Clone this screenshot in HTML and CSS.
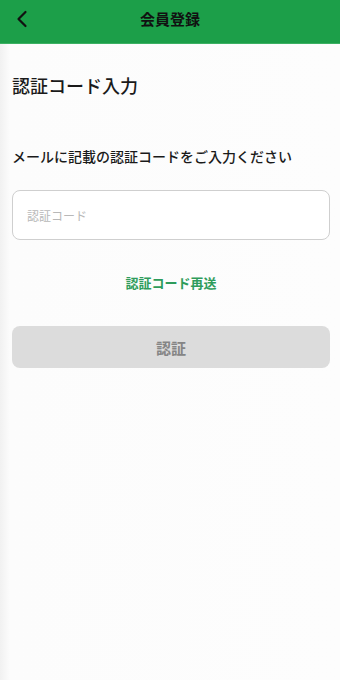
FILE: index.html
```html
<!DOCTYPE html>
<html lang="ja">
<head>
<meta charset="utf-8">
<link rel="stylesheet" href="styles.css">
</head>
<body>
<div class="app">
  <header class="topbar">
    <span class="back">
      <svg width="12" height="18" viewBox="0 0 12 18"><path d="M9.5 2 L2.5 9 L9.5 16" fill="none" stroke="#111" stroke-width="2.2" stroke-linecap="round" stroke-linejoin="round"/></svg>
    </span>
    <h1 class="title">会員登録</h1>
  </header>
  <main class="content">
    <h2 class="heading">認証コード入力</h2>
    <p class="desc">メールに記載の認証コードをご入力ください</p>
    <div class="field"><span class="placeholder">認証コード</span></div>
    <div class="resend">認証コード再送</div>
    <div class="btn">認証</div>
  </main>
</div>
</body>
</html>
```
FILE: styles.css
```css
* { box-sizing: border-box; margin: 0; padding: 0; }
html, body { width: 340px; height: 680px; }
body {
  font-family: "Noto Sans CJK JP", "Noto Sans", sans-serif;
  background: #fdfdfd;
  color: #1a1a1a;
}
.app { height: 680px; background: linear-gradient(to right, #f1f1f1 0px, #fcfcfc 10px, #fdfdfd 100%); }
.topbar {
  height: 44px;
  background: #1c9f49;
  border-bottom: 1px solid #3cb063;
  display: flex;
  align-items: center;
  justify-content: center;
  position: relative;
}
.back { position: absolute; left: 16px; top: 10px; display: flex; }
.title { font-size: 15px; font-weight: 700; color: #111; margin-top: -6px; }
.content { padding: 0 10px 0 12px; display: flex; flex-direction: column; }
.heading { font-size: 18px; font-weight: 500; margin-top: 28px; line-height: 26px; }
.desc { font-size: 14px; font-weight: 500; margin-top: 48px; line-height: 20px; }
.field {
  margin-top: 24px;
  height: 50px;
  border: 1px solid #cfcfcf;
  border-radius: 8px;
  background: #fff;
  display: flex;
  align-items: center;
  padding-left: 14px;
}
.placeholder { font-size: 12px; color: #b8b8b8; }
.resend { margin-top: 34px; text-align: center; font-size: 13px; font-weight: 700; color: #2e9c5b; line-height: 18px; }
.btn {
  margin-top: 34px;
  height: 42px;
  background: #dcdcdc;
  border-radius: 8px;
  display: flex;
  align-items: center;
  justify-content: center;
  font-size: 15px;
  font-weight: 700;
  color: #858585;
}
```
